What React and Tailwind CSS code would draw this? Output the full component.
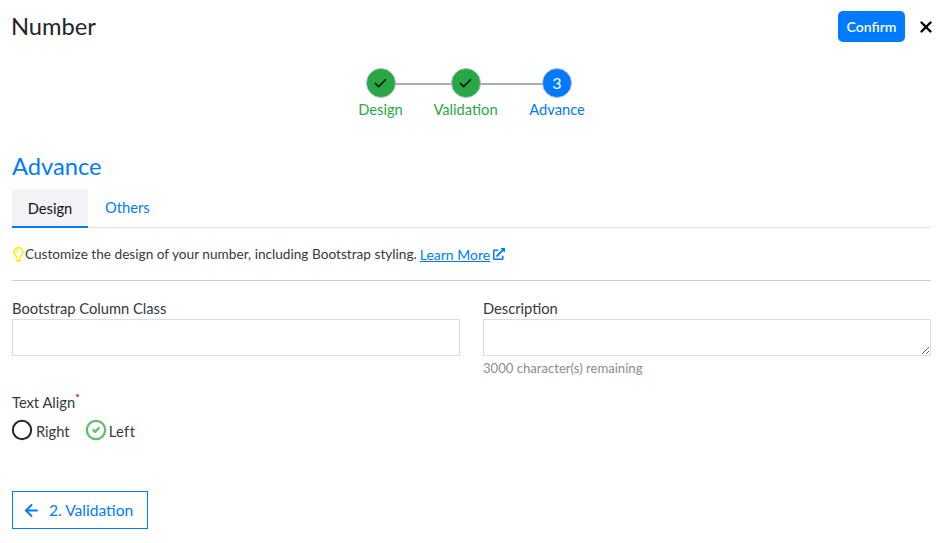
import React from "react";
import { Check, X, ArrowLeft, Circle, CircleCheck } from "lucide-react";
import { FaRegLightbulb, FaExternalLinkAlt } from "react-icons/fa";

function Step({ state, label, n, labelW }) {
  const done = state === "done";
  return (
    <div className={`flex flex-col items-center ${labelW}`}>
      <div className={`w-[30px] h-[30px] shrink-0 rounded-full border border-[#b8bec5] flex items-center justify-center ${done ? "bg-[#28a745]" : "bg-[#007bff] border-[#7fb5ee]"} text-white text-[16px] leading-none relative z-10`}>
        {done ? <Check size={15} strokeWidth={2.8} color="#111" /> : n}
      </div>
      <div className={`whitespace-nowrap -mt-[1px] text-[14.7px] leading-[24px] ${done ? "text-[#28a745]" : "text-[#007bff]"}`}>{label}</div>
    </div>
  );
}

export default function App() {
  return (
    <div className="w-[942px] h-[543px] bg-white font-['Lato','Liberation_Sans',sans-serif] text-[#212529] overflow-hidden pl-3 pr-[11px] flex flex-col">
      <div className="flex items-center justify-between h-[52px] pt-[1px]">
        <div className="text-[23.7px] leading-[30px] -mt-[2px] -ml-px">Number</div>
        <div className="flex items-center -mr-[4px]">
          <button className="w-[67px] h-[31px] rounded-[5px] bg-[#007bff] text-white text-[14px] font-semibold leading-none">Confirm</button>
          <X size={18} strokeWidth={3.2} className="ml-[12px] text-black" />
        </div>
      </div>

      <div className="relative flex justify-center h-[84px] mt-[16px] ml-[1px]">
        <div className="absolute top-[15px] left-[368px] w-[178px] h-[2px] bg-[#a5acb5]" />
        <div className="flex">
          <Step state="done" label="Design" labelW="w-[45px]" />
          <div className="w-[29px]" />
          <Step state="done" label="Validation" labelW="w-[67px]" />
          <div className="w-[29px]" />
          <Step state="active" label="Advance" n="3" labelW="w-[58px]" />
        </div>
      </div>

      <div className="text-[23.7px] leading-[30px] text-[#007bff] mt-[-1px]">Advance</div>

      <div className="flex border-b border-[#dee2e6] h-[39px] mt-[8px] text-[14.7px]">
        <div className="w-[76px] h-[39px] bg-[#f1f3f6] border-b-2 border-[#007bff] flex items-center justify-center pt-[1px] text-[#111]">Design</div>
        <div className="ml-[17px] text-[#007bff] leading-[36px]">Others</div>
      </div>

      <div className="flex items-center h-[24px] mt-[14px] text-[13.65px] text-[#343a40]">
        <FaRegLightbulb size={15} className="text-[#ffeb00] -ml-[1px] -mr-[1px]" />
        <span>Customize the design of your number, including Bootstrap styling.</span>
        <a className="ml-[3px] text-[14px] text-[#007bff] underline">Learn More</a>
        <FaExternalLinkAlt size={12} className="ml-[3px] text-[#007bff]" />
      </div>

      <div className="border-b border-[#c9cdd2] mt-[14px]" />

      <div className="flex gap-[23px] mt-[16px]">
        <div className="w-[448px]">
          <div className="text-[14.7px] leading-[22px] text-[#343a40]">Bootstrap Column Class</div>
          <div className="h-[37px] border border-[#dadde1]" />
        </div>
        <div className="w-[448px]">
          <div className="text-[14.7px] leading-[22px] text-[#343a40]">Description</div>
          <textarea className="block w-full h-[37px] border border-[#dadde1] outline-none" />
          <div className="text-[13.1px] leading-[20px] text-[#868e96] mt-[2px]">3000 character(s) remaining</div>
        </div>
      </div>

      <div className="mt-[13px] text-[14.7px] leading-[22px] text-[#343a40] flex">
        Text Align<span className="w-[3px] h-[3px] bg-[#ef3e4a] rounded-full ml-[1px] mt-[3px]" />
      </div>
      <div className="flex items-center mt-[6px] text-[14.7px] text-[#343a40] h-[22px]">
        <Circle size={22} strokeWidth={2.2} className="text-[#212529] -ml-[1px]" />
        <span className="ml-[3px] mt-[3px]">Right</span>
        <CircleCheck size={22} strokeWidth={2.6} className="text-[#62bd73] ml-[15px]" />
        <span className="ml-[2px] mt-[3px] tracking-[0.4px]">Left</span>
      </div>

      <button className="mt-[50px] w-[136px] h-[38px] border-[1.5px] border-[#007bff] text-[#007bff] text-[15.6px] flex items-center pl-[9px] pt-[1px]">
        <ArrowLeft size={19} strokeWidth={2.4} />
        <span className="ml-[8px]">2. Validation</span>
      </button>
    </div>
  );
}
